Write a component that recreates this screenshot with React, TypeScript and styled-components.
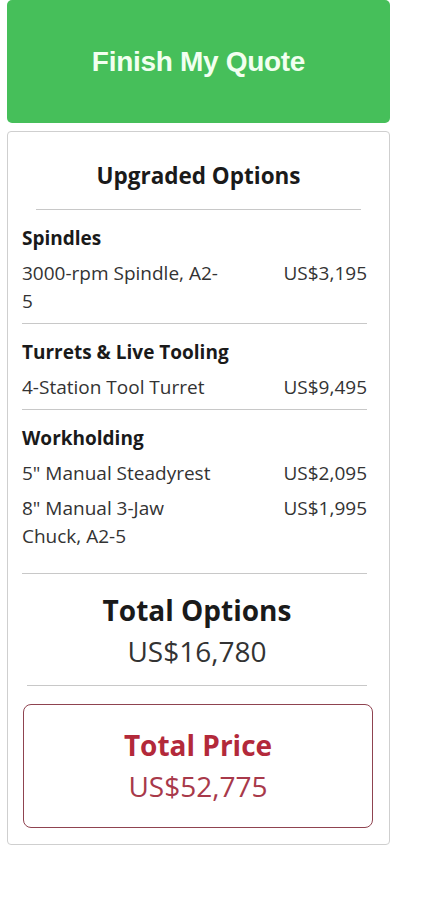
import React, { FC } from "react";
import styled, { createGlobalStyle } from "styled-components";

const GlobalStyle = createGlobalStyle`
  body {
    margin: 0;
    background: #fff;
    font-family: "Open Sans", "Liberation Sans", sans-serif;
    color: #222;
  }
`;

type Item = { name: string; price: string };
type Group = { title: string; items: Item[] };

const groups: Group[] = [
    { title: "Spindles", items: [{ name: "3000-rpm Spindle, A2-5", price: "US$3,195" }] },
    { title: "Turrets & Live Tooling", items: [{ name: "4-Station Tool Turret", price: "US$9,495" }] },
    {
        title: "Workholding",
        items: [
            { name: "5\" Manual Steadyrest", price: "US$2,095" },
            { name: "8\" Manual 3-Jaw Chuck, A2-5", price: "US$1,995" },
        ],
    },
];

const Page = styled.div`
  width: 383px;
  margin-left: 7px;
  display: flex;
  flex-direction: column;
  gap: 8px;
`;

const FinishButton = styled.button`
  height: 123px;
  border: 0;
  border-radius: 5px;
  background: #46bf5a;
  color: #f2fff0;
  font-family: "Liberation Sans", Arial, sans-serif;
  font-weight: bold;
  font-size: 28px;
  letter-spacing: -0.3px;
  cursor: pointer;
`;

const Card = styled.section`
  border: 1px solid #cfcfcf;
  border-radius: 4px;
  padding: 0 22px 16px 14px;
`;

const CardTitle = styled.h2`
  margin: 0 6px 0 14px;
  padding: 29px 0 18px;
  text-align: center;
  font-size: 22.5px;
  font-weight: 700;
  line-height: 30px;
  color: #1a1a1a;
  border-bottom: 1px solid #c8c8c8;
`;

const GroupBlock = styled.div<{ $last?: boolean }>`
  padding: 14px 0 ${p => (p.$last ? "23px" : "8px")};
  border-bottom: 1px solid #c8c8c8;
`;

const GroupTitle = styled.h3`
  margin: 0 0 7px;
  font-size: 19px;
  font-weight: 700;
  line-height: 28px;
  color: #1a1a1a;
`;

const Row = styled.div`
  display: grid;
  grid-template-columns: 202px 1fr;
  font-size: 19px;
  line-height: 28px;
  color: #333;
  & + & {
    margin-top: 7px;
  }
`;

const Price = styled.span`
  text-align: right;
`;

const Totals = styled.div`
  margin: 0 0 0 5px;
  padding: 18px 0 11px;
  text-align: center;
  border-bottom: 1px solid #c8c8c8;
`;

const TotalLabel = styled.div<{ $red?: boolean }>`
  font-size: 28px;
  font-weight: 700;
  line-height: 36px;
  color: ${p => (p.$red ? "#b3293a" : "#1a1a1a")};
`;

const TotalValue = styled.div<{ $red?: boolean }>`
  font-size: 28px;
  line-height: 46px;
  color: ${p => (p.$red ? "#a8394a" : "#333")};
`;

const PriceBox = styled.div`
  margin: 18px -6px 0 1px;
  padding: 22px 0 18px;
  border: 1.5px solid #8f4350;
  border-radius: 8px;
  text-align: center;
`;

const App: FC = () => (
    <>
        <GlobalStyle />
        <Page>
            <FinishButton>Finish My Quote</FinishButton>
            <Card>
                <CardTitle>Upgraded Options</CardTitle>
                {groups.map((g, i) => (
                    <GroupBlock key={g.title} $last={i === groups.length - 1}>
                        <GroupTitle>{g.title}</GroupTitle>
                        {g.items.map(it => (
                            <Row key={it.name}>
                                <span>{it.name}</span>
                                <Price>{it.price}</Price>
                            </Row>
                        ))}
                    </GroupBlock>
                ))}
                <Totals>
                    <TotalLabel>Total Options</TotalLabel>
                    <TotalValue>US$16,780</TotalValue>
                </Totals>
                <PriceBox>
                    <TotalLabel $red>Total Price</TotalLabel>
                    <TotalValue $red>US$52,775</TotalValue>
                </PriceBox>
            </Card>
        </Page>
    </>
);

export default App;
